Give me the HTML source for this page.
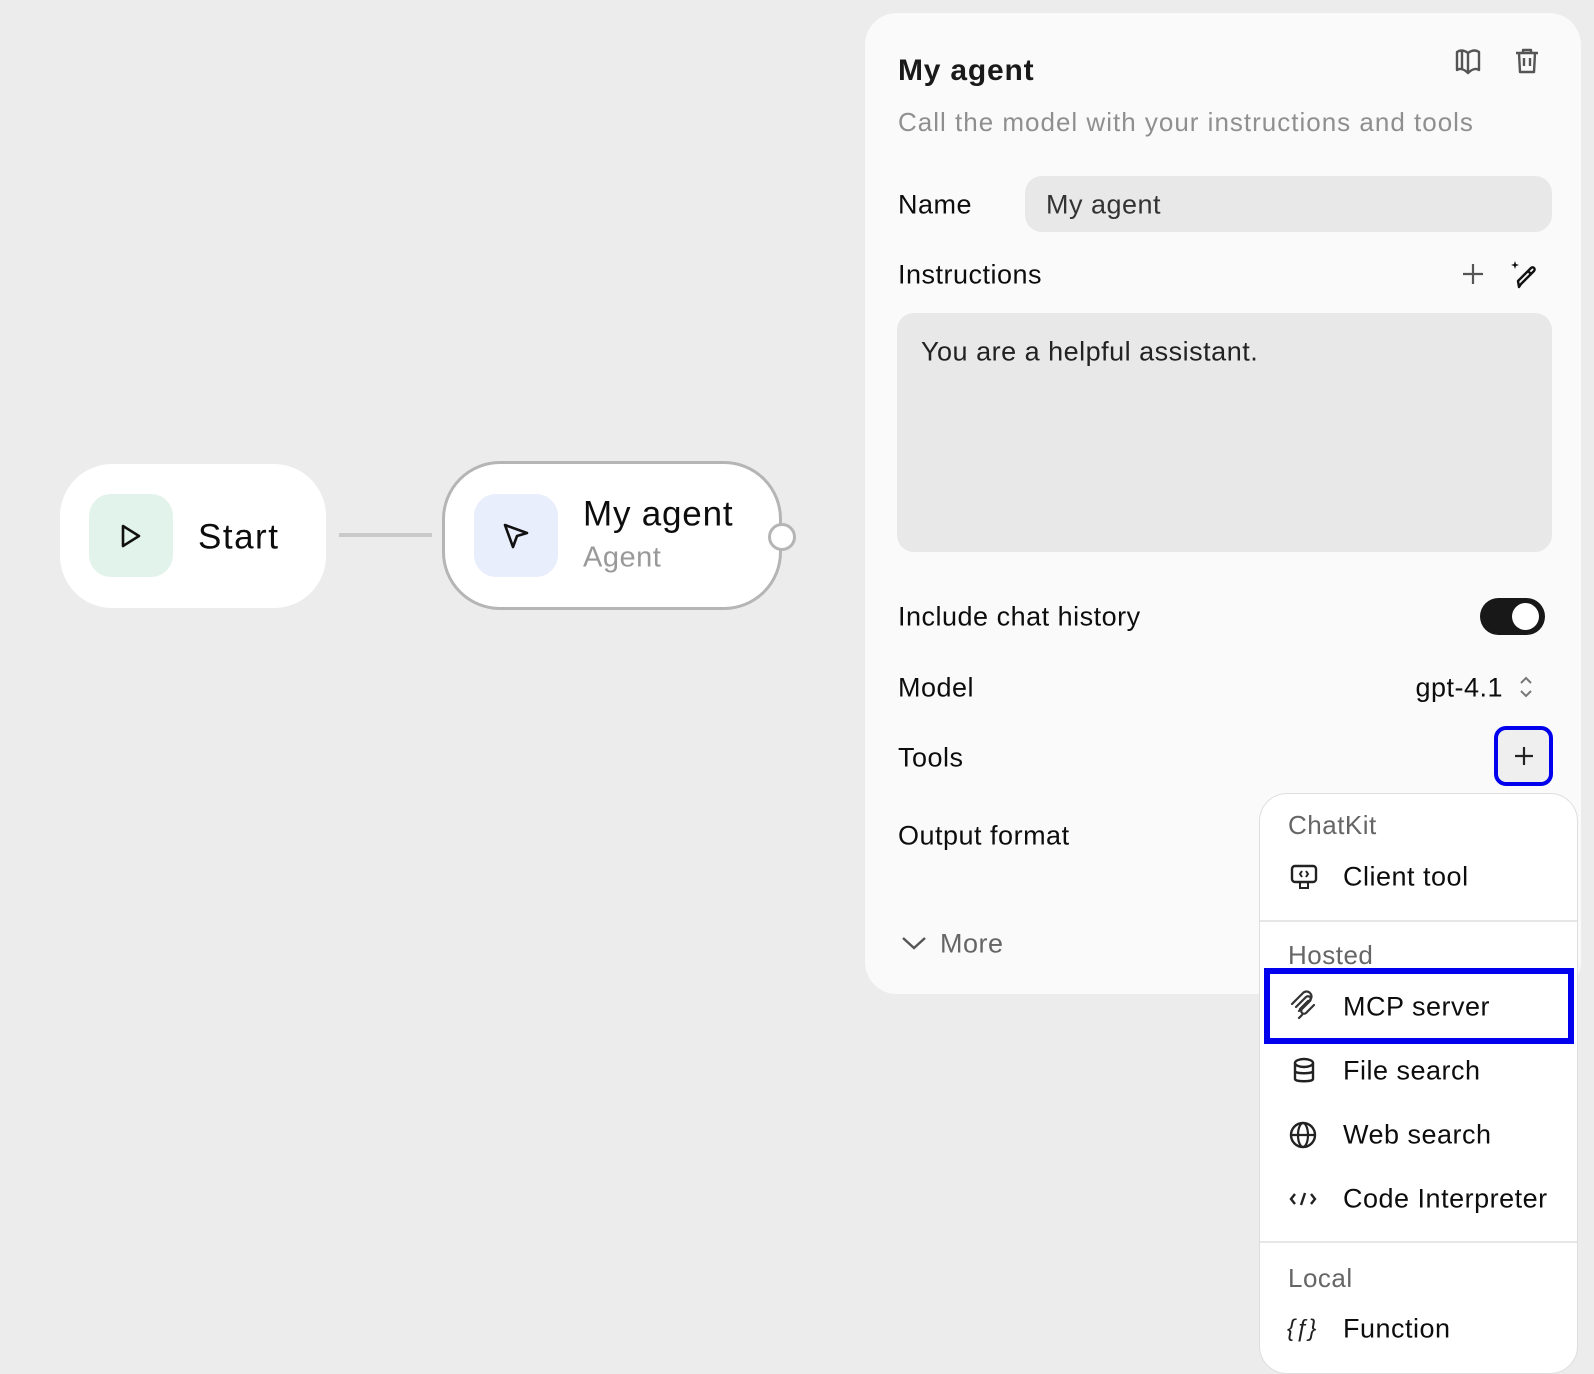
<!DOCTYPE html>
<html><head><meta charset="utf-8"><style>
*{box-sizing:border-box;margin:0;padding:0}
body{width:1594px;height:1374px;background:#ececec;font-family:"Liberation Sans",sans-serif;color:#0d0d0d;position:relative;overflow:hidden}
.a{position:absolute}
.t{position:absolute;white-space:nowrap;line-height:1;transform:translateY(-50%);letter-spacing:0.5px}
svg{position:absolute;overflow:visible}
</style></head><body>

<div class="a" style="left:60px;top:464px;width:266px;height:144px;background:#fff;border-radius:52px"></div>
<div class="a" style="left:89px;top:494px;width:84px;height:83px;background:#e2f3ec;border-radius:22px"></div>
<svg style="left:119px;top:523px" width="24" height="26" viewBox="0 0 24 26"><path d="M4 3 L20 13 L4 23 Z" fill="none" stroke="#111" stroke-width="2.6" stroke-linejoin="round"/></svg>
<div class="t" style="left:198px;top:537px;font-size:35px;letter-spacing:1.5px">Start</div>

<div class="a" style="left:339px;top:533px;width:93px;height:4px;background:#c9c9c9"></div>

<div class="a" style="left:442px;top:461px;width:340px;height:149px;background:#fff;border:3px solid #b5b5b5;border-radius:58px"></div>
<div class="a" style="left:474px;top:494px;width:84px;height:83px;background:#e8eefc;border-radius:22px"></div>
<svg style="left:502px;top:522px" width="28" height="28" viewBox="0 0 28 28"><path d="M3 3 L25 11 L15 14 L11 25 Z" fill="none" stroke="#111" stroke-width="2.6" stroke-linejoin="round"/></svg>
<div class="t" style="left:583px;top:514px;font-size:35px;letter-spacing:0.8px">My agent</div>
<div class="t" style="left:583px;top:558px;font-size:29px;color:#999">Agent</div>
<div class="a" style="left:768px;top:523px;width:28px;height:28px;border-radius:50%;background:#fff;border:3px solid #b5b5b5"></div>

<div class="a" style="left:865px;top:13px;width:716px;height:981px;background:#fafafa;border-radius:32px"></div>
<div class="t" style="left:898px;top:71px;font-size:30px;font-weight:bold;color:#1a1a1a;letter-spacing:0.8px">My agent</div>
<div class="t" style="left:898px;top:122px;font-size:26px;color:#8f8f8f;letter-spacing:1px">Call the model with your instructions and tools</div>
<svg style="left:1454px;top:47px" width="28" height="28" viewBox="0 0 28 28"><path d="M14 6 L14 26 M14 6 C10 3 6 3 3 5 L3 23 C6 21 10 22 14 26 C18 22 22 21 25 23 L25 5 C22 3 18 3 14 6 Z M8 4 L8 22" fill="none" stroke="#555" stroke-width="2.4" stroke-linejoin="round"/></svg>
<svg style="left:1513px;top:47px" width="28" height="28" viewBox="0 0 28 28"><path d="M3 6 H25 M10 6 V3 H18 V6 M6 6 L7 25 H21 L22 6 M11 11 V19 M17 11 V19" fill="none" stroke="#555" stroke-width="2.4" stroke-linejoin="round"/></svg>

<div class="t" style="left:898px;top:205px;font-size:27px">Name</div>
<div class="a" style="left:1025px;top:176px;width:527px;height:56px;background:#e8e8e8;border-radius:17px"></div>
<div class="t" style="left:1046px;top:205px;font-size:27px;color:#333">My agent</div>

<div class="t" style="left:898px;top:275px;font-size:27px">Instructions</div>
<svg style="left:1462px;top:263px" width="22" height="22" viewBox="0 0 22 22"><path d="M11 1 V21 M1 11 H21" stroke="#555" stroke-width="2.2"/></svg>
<svg style="left:1510px;top:260px" width="30" height="30" viewBox="0 0 30 30"><path d="M9 27 L8 21 L21 8 C23 6 26 9 24 11 L11 24 Z M18 11 L21 14" fill="none" stroke="#111" stroke-width="2.4" stroke-linejoin="round"/><path d="M5 1 L6 4 L9 5 L6 6 L5 9 L4 6 L1 5 L4 4 Z" fill="#111"/></svg>

<div class="a" style="left:897px;top:313px;width:655px;height:239px;background:#e8e8e8;border-radius:17px"></div>
<div class="t" style="left:921px;top:352px;font-size:27px;color:#222">You are a helpful assistant.</div>

<div class="t" style="left:898px;top:617px;font-size:27px">Include chat history</div>
<div class="a" style="left:1480px;top:598px;width:65px;height:37px;background:#181818;border-radius:19px"></div>
<div class="a" style="left:1512px;top:603px;width:27px;height:27px;background:#fff;border-radius:50%"></div>

<div class="t" style="left:898px;top:688px;font-size:27px">Model</div>
<div class="t" style="right:91px;top:688px;font-size:27px">gpt-4.1</div>
<svg style="left:1518px;top:675px" width="16" height="24" viewBox="0 0 16 24"><path d="M3 8 L8 3 L13 8 M3 16 L8 21 L13 16" fill="none" stroke="#777" stroke-width="2"/></svg>

<div class="t" style="left:898px;top:758px;font-size:27px">Tools</div>
<div class="a" style="left:1494px;top:726px;width:59px;height:60px;background:#efefef;border:4px solid #0000ee;border-radius:12px"></div>
<svg style="left:1514px;top:746px" width="20" height="20" viewBox="0 0 20 20"><path d="M10 1 V19 M1 10 H19" stroke="#222" stroke-width="2.2"/></svg>

<div class="t" style="left:898px;top:836px;font-size:27px">Output format</div>

<svg style="left:901px;top:935px" width="26" height="16" viewBox="0 0 26 16"><path d="M2 3 L13 13 L24 3" fill="none" stroke="#555" stroke-width="2.4"/></svg>
<div class="t" style="left:940px;top:944px;font-size:27px;color:#666">More</div>

<div class="a" style="left:1259px;top:793px;width:319px;height:581px;background:#fff;border:1px solid #dedede;border-radius:28px"></div>
<div class="t" style="left:1288px;top:825px;font-size:26px;color:#666">ChatKit</div>
<svg style="left:1290px;top:864px" width="28" height="26" viewBox="0 0 28 26"><rect x="2" y="2" width="24" height="16" rx="3" fill="none" stroke="#222" stroke-width="2.4"/><path d="M10 19 V24 H18 V19 M12 7 L10 10 L12 13 M16 7 L18 10 L16 13" fill="none" stroke="#222" stroke-width="2"/></svg>
<div class="t" style="left:1343px;top:877px;font-size:27px">Client tool</div>
<div class="a" style="left:1260px;top:920px;width:317px;height:2px;background:#e6e6e6"></div>
<div class="t" style="left:1288px;top:955px;font-size:26px;color:#666">Hosted</div>
<div class="a" style="left:1264px;top:968px;width:310px;height:76px;border:6px solid #0000ee"></div>
<svg style="left:1289px;top:990px" width="30" height="30" viewBox="0 0 30 30"><path d="M3 14 L14 3 C16 1 19 1 21 3 C23 5 23 8 21 10 L10 21 M7 17 L17 7 C18 6 20 6 21 7 C22 8 22 10 21 11 L13 19 C12 20 12 22 13 23 C14 24 16 24 17 23 L25 15 M11 19 L19 11 M13 25 L10 28" fill="none" stroke="#333" stroke-width="2.2" stroke-linecap="round"/></svg>
<div class="t" style="left:1343px;top:1007px;font-size:27px">MCP server</div>
<svg style="left:1292px;top:1057px" width="24" height="28" viewBox="0 0 24 28"><ellipse cx="12" cy="6" rx="9" ry="4" fill="none" stroke="#222" stroke-width="2.4"/><path d="M3 6 V22 C3 25 21 25 21 22 V6 M3 14 C3 17 21 17 21 14" fill="none" stroke="#222" stroke-width="2.4"/></svg>
<div class="t" style="left:1343px;top:1071px;font-size:27px">File search</div>
<svg style="left:1289px;top:1121px" width="28" height="28" viewBox="0 0 28 28"><circle cx="14" cy="14" r="12" fill="none" stroke="#222" stroke-width="2.4"/><ellipse cx="14" cy="14" rx="5" ry="12" fill="none" stroke="#222" stroke-width="2.2"/><path d="M2 14 H26" stroke="#222" stroke-width="2.2"/></svg>
<div class="t" style="left:1343px;top:1135px;font-size:27px">Web search</div>
<svg style="left:1289px;top:1190px" width="28" height="18" viewBox="0 0 28 18"><path d="M6 4 L2 9 L6 14 M22 4 L26 9 L22 14 M16 3 L12 15" fill="none" stroke="#222" stroke-width="2.4"/></svg>
<div class="t" style="left:1343px;top:1199px;font-size:27px">Code Interpreter</div>
<div class="a" style="left:1260px;top:1241px;width:317px;height:2px;background:#e6e6e6"></div>
<div class="t" style="left:1288px;top:1278px;font-size:26px;color:#666">Local</div>
<div class="t" style="left:1287px;top:1329px;font-size:24px;font-style:italic;color:#222;letter-spacing:0">{ƒ}</div>
<div class="t" style="left:1343px;top:1329px;font-size:27px">Function</div>
</body></html>
